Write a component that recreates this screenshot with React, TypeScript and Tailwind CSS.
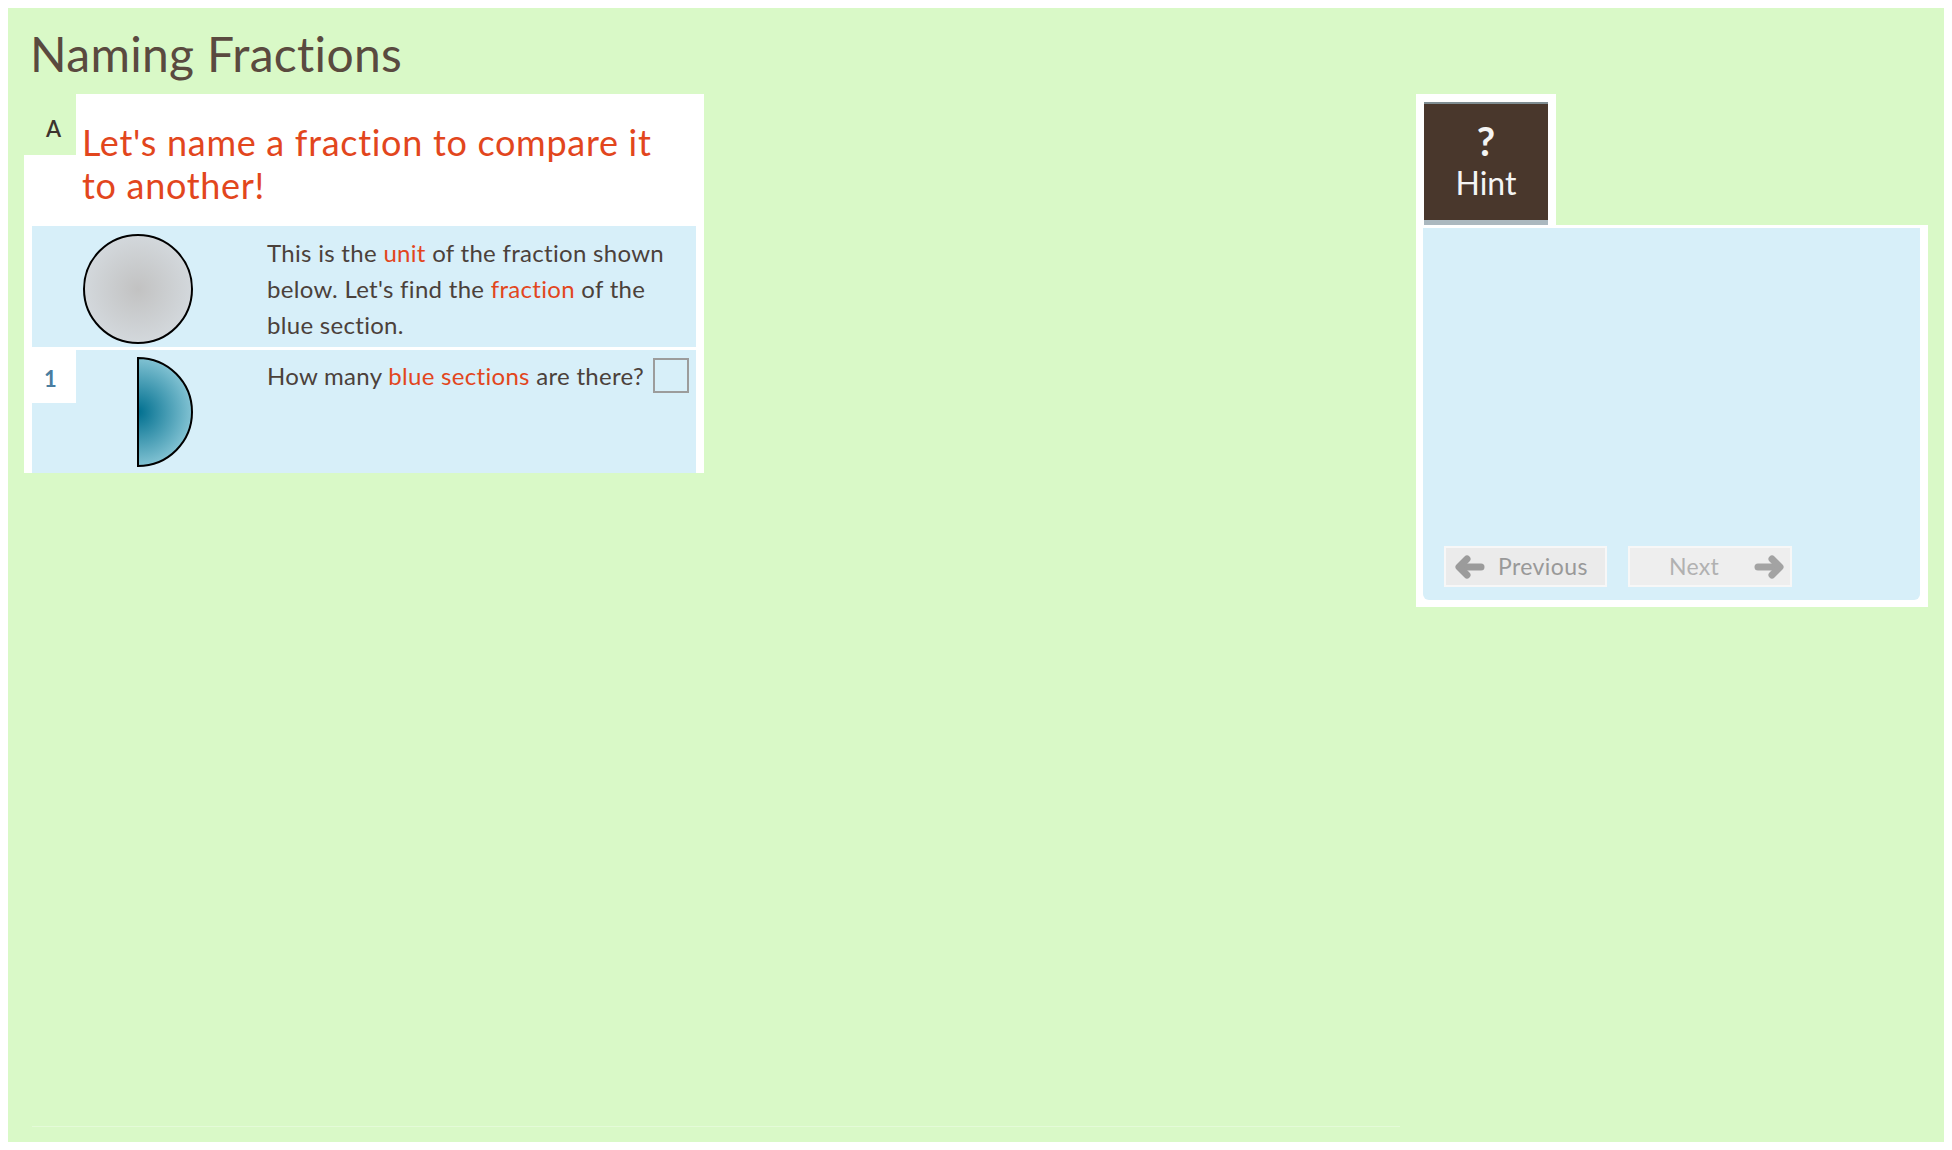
import React from "react";

const font = { fontFamily: "Lato, 'Open Sans', sans-serif" };

function Circle() {
  return (
    <svg width="112" height="112" viewBox="0 0 112 112">
      <defs>
        <radialGradient id="gray" cx="50%" cy="50%" r="50%">
          <stop offset="0%" stopColor="#c2c2c2" />
          <stop offset="100%" stopColor="#d3d8dc" />
        </radialGradient>
      </defs>
      <circle cx="56" cy="56" r="54" fill="url(#gray)" stroke="#000" strokeWidth="2" />
    </svg>
  );
}

function HalfDisc() {
  return (
    <svg width="112" height="112" viewBox="0 0 112 112">
      <defs>
        <radialGradient id="teal" cx="56" cy="56" r="56" gradientUnits="userSpaceOnUse">
          <stop offset="0%" stopColor="#006f8f" />
          <stop offset="100%" stopColor="#86c5d5" />
        </radialGradient>
      </defs>
      <path d="M56 2 A54 54 0 0 1 56 110 Z" fill="url(#teal)" stroke="#000" strokeWidth="2" strokeLinejoin="miter" />
    </svg>
  );
}

function ArrowLeft() {
  return (
    <svg width="32" height="24" viewBox="0 0 32 24">
      <path d="M28 12 H8" stroke="#9b9b9b" strokeWidth="7" strokeLinecap="round" fill="none" />
      <path d="M14 4 L6 12 L14 20" stroke="#9b9b9b" strokeWidth="7" strokeLinecap="round" strokeLinejoin="round" fill="none" />
    </svg>
  );
}

function ArrowRight() {
  return (
    <svg width="32" height="24" viewBox="0 0 32 24">
      <path d="M4 12 H24" stroke="#a3a3a3" strokeWidth="7" strokeLinecap="round" fill="none" />
      <path d="M18 4 L26 12 L18 20" stroke="#a3a3a3" strokeWidth="7" strokeLinecap="round" strokeLinejoin="round" fill="none" />
    </svg>
  );
}

export default function App() {
  return (
    <div className="w-[1952px] h-[1150px] bg-white p-[8px]" style={font}>
      <div className="w-[1936px] h-[1134px] bg-[#d9f9c7] px-[16px] flex flex-col">
        <div className="h-[86px] pt-[22px] pl-[6px]">
          <h1 className="text-[48px] leading-[48px] tracking-[0.3px] text-[#5a4a3f] font-normal">Naming Fractions</h1>
        </div>

        <div className="flex justify-between items-start">
          {/* Left question panel */}
          <div className="w-[680px] flex flex-col">
            <div className="flex h-[132px]">
              <div className="w-[52px] flex flex-col">
                <div className="h-[61px] pl-[22px] pt-[24px] text-[22px] leading-[22px] text-[#3d342e] font-semibold">A</div>
                <div className="flex-1 bg-white" />
              </div>
              <div className="flex-1 bg-white pl-[6px] pt-[27px]">
                <div className="text-[36px] leading-[43px] tracking-[0.7px] text-[#e2461d]">
                  Let's name a fraction to compare it
                  <br />
                  to another!
                </div>
              </div>
            </div>
            <div className="bg-white px-[8px] flex flex-col gap-[3px]">
              <div className="h-[121px] bg-[#d7eff9] flex items-start">
                <div className="w-[44px]" />
                <div className="w-[191px] pt-[7px] pl-[6px]">
                  <Circle />
                </div>
                <div className="flex-1 pt-[9px] text-[24px] leading-[36px] tracking-[0.3px] text-[#4b413b]">
                  This is the <span className="text-[#e2461d]">unit</span> of the fraction shown
                  <br />
                  below. Let's find the <span className="text-[#e2461d]">fraction</span> of the
                  <br />
                  blue section.
                </div>
              </div>
              <div className="h-[123px] bg-[#d7eff9] flex items-start">
                <div className="w-[44px] h-[53px] bg-white pl-[12px] pt-[18px] text-[22px] leading-[22px] font-bold text-[#4a7da0]">1</div>
                <div className="w-[191px] pt-[6px] pl-[6px]">
                  <HalfDisc />
                </div>
                <div className="flex-1 pt-[8px] flex items-start text-[24px] leading-[36px] tracking-[0.3px] text-[#4b413b]">
                  <span className="whitespace-nowrap">
                    How many <span className="text-[#e2461d]">blue sections</span> are there?
                  </span>
                  <div className="ml-[9px] w-[36px] h-[35px] shrink-0 border-2 border-[#9c9c9c] bg-[#d7eff9]" />
                </div>
              </div>
            </div>
          </div>

          {/* Right hint panel */}
          <div className="w-[512px] flex flex-col">
            <div className="w-[140px] bg-white px-[8px] pt-[8px]">
              <div className="w-[124px] h-[123px] bg-[#49372c] border-t-2 border-t-[#7f8d92] border-b-[5px] border-b-[#abb8bf] flex flex-col items-center pt-[17px] text-[#f4f4f4]">
                <div className="text-[40px] leading-[40px] font-bold">?</div>
                <div className="mt-[6px] text-[32px] leading-[32px]">Hint</div>
              </div>
            </div>
            <div className="bg-white pt-[3px] pl-[7px] pr-[8px] pb-[7px]">
              <div className="h-[372px] bg-[#d7eff9] rounded-b-[6px] flex items-end pl-[21px] pb-[13px] gap-[21px]">
                <div className="w-[163px] h-[41px] bg-[#ebebeb] border-2 border-[#f7f7f7] flex items-center pl-[7px]">
                  <ArrowLeft />
                  <span className="ml-[13px] text-[23px] leading-[23px] tracking-[0.4px] text-[#999999]">Previous</span>
                </div>
                <div className="w-[164px] h-[41px] bg-[#eeeeee] border-2 border-[#f7f7f7] flex items-center justify-between pl-[39px] pr-[4px]">
                  <span className="text-[23px] leading-[23px] tracking-[0.3px] text-[#b1b1b1]">Next</span>
                  <ArrowRight />
                </div>
              </div>
            </div>
          </div>
        </div>

        <div className="mt-auto mb-[15px] ml-[8px] w-[1368px] h-px bg-[#e4fbd8]" />
      </div>
    </div>
  );
}
